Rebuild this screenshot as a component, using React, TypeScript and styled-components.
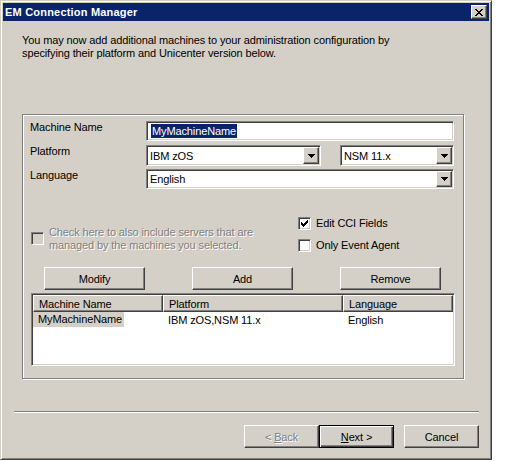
import React from 'react';
import styled, { createGlobalStyle, css } from 'styled-components';

const Global = createGlobalStyle`
  html, body { margin: 0; padding: 0; background: #ffffff; }
  body {
    font-family: "Liberation Sans", Arial, sans-serif;
    font-size: 11px;
    letter-spacing: -0.12px;
    color: #000;
  }
  * { box-sizing: border-box; }
`;

const raised = css`
  border: 1px solid;
  border-color: #ffffff #404040 #404040 #ffffff;
  box-shadow: inset -1px -1px #808080, inset 1px 1px #d4d0c8;
`;

const sunken = css`
  border: 1px solid;
  border-color: #808080 #ffffff #ffffff #808080;
  box-shadow: inset 1px 1px #404040, inset -1px -1px #d4d0c8;
`;

const Window = styled.div`
  width: 492px;
  height: 460px;
  background: #d4d0c8;
  border: 1px solid;
  border-color: #d4d0c8 #404040 #404040 #d4d0c8;
  box-shadow: inset 1px 1px #ffffff, inset -1px -1px #808080;
  padding: 2px;
  display: flex;
  flex-direction: column;
`;

const TitleBar = styled.div`
  height: 18px;
  background: #0a246a;
  display: flex;
  align-items: center;
  justify-content: space-between;
  padding: 0 2px 0 2px;
`;

const Title = styled.span`
  color: #ffffff;
  font-weight: bold;
  font-size: 11px;
  letter-spacing: 0.2px;
  line-height: 13px;
`;

const CloseButton = styled.div`
  width: 16px;
  height: 14px;
  background: #d4d0c8;
  ${raised};
  display: flex;
  align-items: center;
  justify-content: center;
`;

const Description = styled.p`
  margin: 13px 0 0 19px;
  line-height: 13px;
`;

const Group = styled.div`
  margin: 54px 0 0 19px;
  width: 442px;
  height: 265px;
  border: 1px solid #808080;
  box-shadow: 1px 1px 0 #ffffff, inset 1px 1px 0 #ffffff;
  padding: 6px 9px 0 7px;
  display: flex;
  flex-direction: column;
`;

const Form = styled.div`
  display: grid;
  grid-template-columns: 116px 1fr;
  grid-template-rows: 24px 24px 20px;
  align-items: start;
`;

const Label = styled.label`
  line-height: 13px;
`;

const TextInput = styled.div`
  height: 20px;
  background: #ffffff;
  ${sunken};
  padding: 2px 0 0 4px;
  display: flex;
  align-items: flex-start;
`;

const Selected = styled.span`
  background: #0a246a;
  color: #ffffff;
  line-height: 14px;
  padding: 0 1px;
`;

const ComboPair = styled.div`
  display: flex;
  gap: 19px;
`;

const Combo = styled.div<{ $w?: number; $h?: number }>`
  ${({ $w }) => ($w ? `width: ${$w}px;` : 'width: 100%;')}
  height: ${({ $h }) => $h ?? 21}px;
  background: #ffffff;
  ${sunken};
  padding: 1px;
  display: flex;
  align-items: stretch;
`;

const ComboText = styled.span`
  flex: 1;
  padding-left: 2px;
  display: flex;
  align-items: center;
`;

const DropButton = styled.span`
  width: 16px;
  background: #d4d0c8;
  ${raised};
  display: flex;
  align-items: center;
  justify-content: center;
`;

const CheckArea = styled.div`
  margin-top: 28px;
  display: grid;
  grid-template-columns: 268px auto;
`;

const CheckColumn = styled.div`
  display: flex;
  flex-direction: column;
  gap: 9px;
`;

const CheckItem = styled.div<{ $disabled?: boolean }>`
  display: flex;
  align-items: center;
  gap: 5px;
  line-height: 13px;
  ${({ $disabled }) =>
    $disabled &&
    css`
      margin: 8px 0 0 1px;
      color: #808080;
      text-shadow: 1px 1px 0 #ffffff;
    `}
`;

const Box = styled.span<{ $disabled?: boolean }>`
  flex: none;
  width: 13px;
  height: 13px;
  background: ${({ $disabled }) => ($disabled ? '#d4d0c8' : '#ffffff')};
  ${sunken};
  display: flex;
  align-items: center;
  justify-content: center;
`;

const ButtonRow = styled.div`
  margin: 15px 13px 0 14px;
  display: flex;
  justify-content: space-between;
`;

const Button = styled.div<{ $w: number; $default?: boolean; $disabled?: boolean }>`
  width: ${({ $w }) => $w}px;
  height: 23px;
  background: #d4d0c8;
  display: flex;
  align-items: center;
  justify-content: center;
  ${({ $default }) =>
    $default
      ? css`
          border: 1px solid #000000;
          box-shadow: inset 1px 1px #ffffff, inset -1px -1px #404040, inset -2px -2px #808080;
        `
      : raised}
  ${({ $disabled }) =>
    $disabled &&
    css`
      color: #808080;
      text-shadow: 1px 1px 0 #ffffff;
    `}
  u { text-decoration: underline; }
`;

const List = styled.div`
  margin: 3px 0 0 1px;
  width: 424px;
  height: 73px;
  background: #ffffff;
  ${sunken};
  padding: 1px;
  display: flex;
  flex-direction: column;
`;

const HeaderRow = styled.div`
  display: flex;
  height: 17px;
`;

const HeaderCell = styled.div<{ $w?: number }>`
  ${({ $w }) => ($w ? `width: ${$w}px;` : 'flex: 1;')}
  background: #d4d0c8;
  ${raised};
  padding-left: 5px;
  display: flex;
  align-items: center;
`;

const DataRow = styled.div`
  display: flex;
  height: 15px;
  align-items: center;
`;

const DataCell = styled.div<{ $w?: number }>`
  ${({ $w }) => ($w ? `width: ${$w}px;` : 'flex: 1;')}
  padding-left: 5px;
  white-space: nowrap;
`;

const RowHighlight = styled.span`
  display: inline-block;
  background: #d4d0c8;
  margin-left: -5px;
  padding: 1px 2px 1px 5px;
  line-height: 13px;
`;

const Separator = styled.div`
  margin: 32px 0 0 11px;
  width: 465px;
  height: 2px;
  border-top: 1px solid #808080;
  border-bottom: 1px solid #ffffff;
`;

const Footer = styled.div`
  margin: 12px 10px 0 0;
  display: flex;
  justify-content: flex-end;
`;

const FooterGap = styled.div`
  width: 10px;
`;

const Pixels: React.FC<{ rows: string[] }> = ({ rows }) => (
  <svg
    width={rows[0].length}
    height={rows.length}
    viewBox={`0 0 ${rows[0].length} ${rows.length}`}
    shapeRendering="crispEdges"
  >
    {rows.flatMap((r, y) =>
      r.split('').map((c, x) =>
        c === 'X' ? <rect key={`${x}-${y}`} x={x} y={y} width={1} height={1} fill="#000" /> : null
      )
    )}
  </svg>
);

const closeGlyph = [
  'XX....XX',
  '.XX..XX.',
  '..XXXX..',
  '...XX...',
  '..XXXX..',
  '.XX..XX.',
  'XX....XX',
];

const checkGlyph = [
  '......X',
  '.....XX',
  'X...XXX',
  'XX.XXX.',
  'XXXXX..',
  '.XXX...',
  '..X....',
];

const arrowGlyph = ['XXXXXXX', '.XXXXX.', '..XXX..', '...X...'];

const Arrow = () => <Pixels rows={arrowGlyph} />;

export default function App() {
  return (
    <>
      <Global />
      <Window>
        <TitleBar>
          <Title>EM Connection Manager</Title>
          <CloseButton>
            <Pixels rows={closeGlyph} />
          </CloseButton>
        </TitleBar>
        <Description>
          You may now add additional machines to your administration configuration by
          <br />
          specifying their platform and Unicenter version below.
        </Description>
        <Group>
          <Form>
            <Label>Machine Name</Label>
            <TextInput>
              <Selected>MyMachineName</Selected>
            </TextInput>
            <Label>Platform</Label>
            <ComboPair>
              <Combo $w={175}>
                <ComboText>IBM zOS</ComboText>
                <DropButton>
                  <Arrow />
                </DropButton>
              </Combo>
              <Combo $w={114}>
                <ComboText>NSM 11.x</ComboText>
                <DropButton>
                  <Arrow />
                </DropButton>
              </Combo>
            </ComboPair>
            <Label>Language</Label>
            <Combo $h={20}>
              <ComboText>English</ComboText>
              <DropButton>
                <Arrow />
              </DropButton>
            </Combo>
          </Form>
          <CheckArea>
            <CheckItem $disabled>
              <Box $disabled />
              <span>
                Check here to also include servers that are
                <br />
                managed by the machines you selected.
              </span>
            </CheckItem>
            <CheckColumn>
              <CheckItem>
                <Box>
                  <Pixels rows={checkGlyph} />
                </Box>
                <span>Edit CCI Fields</span>
              </CheckItem>
              <CheckItem>
                <Box />
                <span>Only Event Agent</span>
              </CheckItem>
            </CheckColumn>
          </CheckArea>
          <ButtonRow>
            <Button $w={101}>Modify</Button>
            <Button $w={101}>Add</Button>
            <Button $w={101}>Remove</Button>
          </ButtonRow>
          <List>
            <HeaderRow>
              <HeaderCell $w={130}>Machine Name</HeaderCell>
              <HeaderCell $w={180}>Platform</HeaderCell>
              <HeaderCell>Language</HeaderCell>
            </HeaderRow>
            <DataRow>
              <DataCell $w={130}>
                <RowHighlight>MyMachineName</RowHighlight>
              </DataCell>
              <DataCell $w={180}>IBM zOS,NSM 11.x</DataCell>
              <DataCell>English</DataCell>
            </DataRow>
          </List>
        </Group>
        <Separator />
        <Footer>
          <Button $w={75} $disabled>
            &lt;&nbsp;<u>B</u>ack
          </Button>
          <Button $w={75} $default>
            <u>N</u>ext &gt;
          </Button>
          <FooterGap />
          <Button $w={75}>Cancel</Button>
        </Footer>
      </Window>
    </>
  );
}
